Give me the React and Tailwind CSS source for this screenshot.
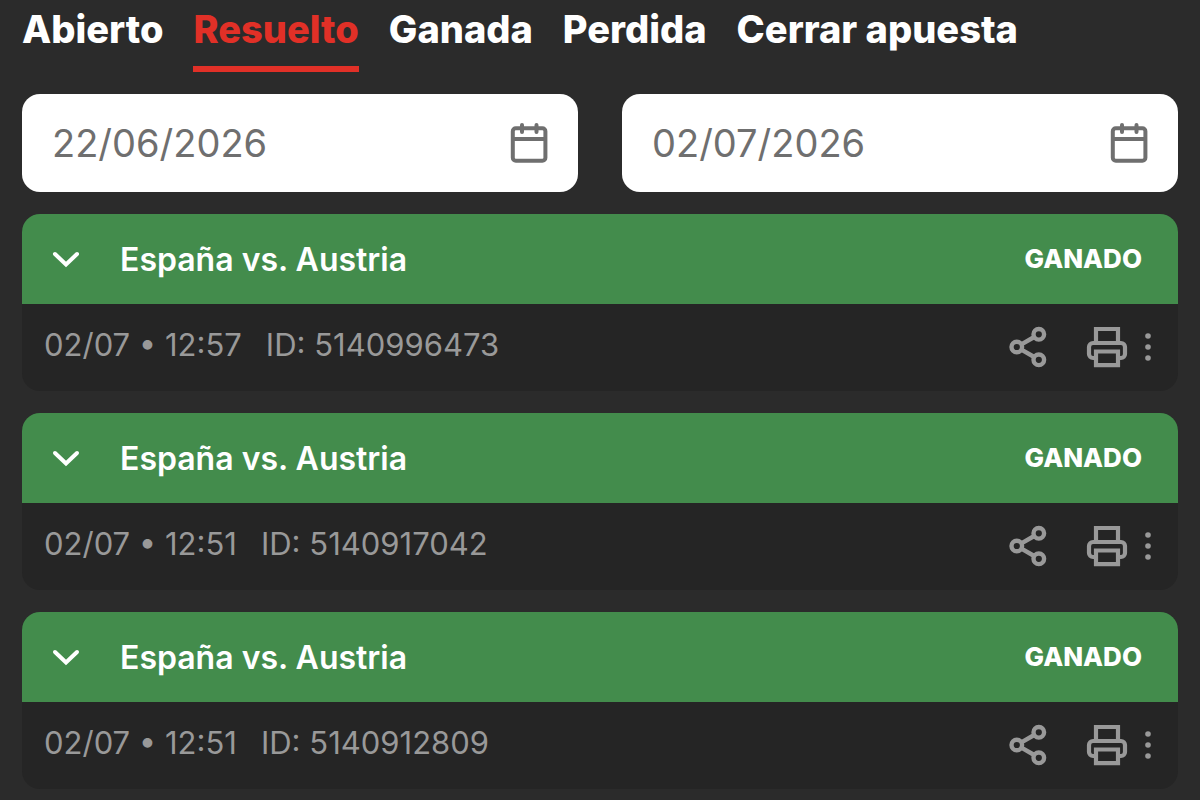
import React, { useState } from 'react';

const TABS = ['Abierto', 'Resuelto', 'Ganada', 'Perdida', 'Cerrar apuesta'];

const BETS = [
  { id: '5140996473', match: 'España vs. Austria', date: '02/07', time: '12:57', status: 'GANADO' },
  { id: '5140917042', match: 'España vs. Austria', date: '02/07', time: '12:51', status: 'GANADO' },
  { id: '5140912809', match: 'España vs. Austria', date: '02/07', time: '12:51', status: 'GANADO' },
];

const CalendarIcon = () => (
  <svg width="38" height="42" viewBox="0 0 38 42" fill="none" stroke="currentColor" strokeWidth="4" strokeLinecap="round">
    <rect x="2.8" y="6.2" width="32.6" height="32.6" rx="3" />
    <path d="M3 17h32" />
    <path d="M12 3v7M26.5 3v7" />
  </svg>
);

const ChevronIcon = () => (
  <svg width="28" height="18" viewBox="0 0 28 18" fill="none" stroke="currentColor" strokeWidth="4" strokeLinecap="round">
    <path d="M3 4l11 10.5L25 4" />
  </svg>
);

const ShareIcon = () => (
  <svg width="38" height="42" viewBox="0 0 38 42" fill="none" stroke="currentColor" strokeWidth="4.4">
    <circle cx="29.8" cy="8.3" r="5.3" />
    <circle cx="7.8" cy="21" r="5.3" />
    <circle cx="29.8" cy="33.8" r="5.3" />
    <path d="M12.4 18.4l12.8-7.4M12.4 23.6l12.8 7.4" />
  </svg>
);

const PrintIcon = () => (
  <svg width="42" height="42" viewBox="0 0 42 42" fill="none" stroke="currentColor" strokeWidth="4.2">
    <path d="M10 17V3h22v14" />
    <path d="M10 32H7a4 4 0 0 1-4-4v-7a4 4 0 0 1 4-4h28a4 4 0 0 1 4 4v7a4 4 0 0 1-4 4h-3" />
    <path d="M10 25.5h22v13.7H10z" />
  </svg>
);

const DotsIcon = () => (
  <svg width="6" height="30" viewBox="0 0 6 30" fill="currentColor">
    <circle cx="3" cy="4" r="2.8" />
    <circle cx="3" cy="15" r="2.8" />
    <circle cx="3" cy="26" r="2.8" />
  </svg>
);

const DateField = ({ label, value, onChange }) => (
  <div className="flex h-[98px] min-w-0 flex-1 items-center rounded-[18px] bg-white px-[30px] text-[#6f6f6f]">
    <input
      type="text"
      aria-label={label}
      value={value}
      onChange={(e) => onChange(e.target.value)}
      className="min-w-0 flex-1 bg-transparent text-[38px] leading-[46px] outline-none"
    />
    <button type="button" aria-label={`Calendario: ${label}`}>
      <CalendarIcon />
    </button>
  </div>
);

const BetCard = ({ bet }) => (
  <article className="overflow-hidden rounded-[18px] bg-[#252525]">
    <header className="flex h-[90px] items-center bg-[#438c4c] pr-9 pl-[30px] text-white">
      <button type="button" aria-label="Ver detalle" className="mr-10">
        <ChevronIcon />
      </button>
      <h2 className="flex-1 pt-0.5 text-[32px] leading-10 font-semibold">{bet.match}</h2>
      <span className="text-[26px] leading-10 font-extrabold">{bet.status}</span>
    </header>
    <div className="flex h-[87px] items-center pr-[27px] pb-0.5 pl-[22px] text-[#999999]">
      <p className="flex flex-1 gap-6 pb-1 text-[31px] leading-10">
        <span>{bet.date} • {bet.time}</span>
        <span>ID: {bet.id}</span>
      </p>
      <button type="button" aria-label="Compartir" className="mr-[39px]">
        <ShareIcon />
      </button>
      <button type="button" aria-label="Imprimir" className="mr-[17px]">
        <PrintIcon />
      </button>
      <button type="button" aria-label="Más opciones">
        <DotsIcon />
      </button>
    </div>
  </article>
);

const App = () => {
  const [activeTab, setActiveTab] = useState('Resuelto');
  const [from, setFrom] = useState('22/06/2026');
  const [to, setTo] = useState('02/07/2026');

  return (
    <main className="min-h-screen bg-[#2b2b2b] px-[22px] pb-3 font-['Inter',sans-serif]">
      <nav className="flex gap-[30px]">
        {TABS.map((tab) => (
          <button
            key={tab}
            type="button"
            onClick={() => setActiveTab(tab)}
            className={`h-[72px] border-b-6 pt-1 pb-3 text-[38px] leading-[50px] font-extrabold whitespace-nowrap
              ${tab === activeTab ? 'border-[#e13027] text-[#e13027]' : 'border-transparent text-white'}`}
          >
            {tab}
          </button>
        ))}
      </nav>

      <div className="mt-[22px] flex gap-11">
        <DateField label="Desde" value={from} onChange={setFrom} />
        <DateField label="Hasta" value={to} onChange={setTo} />
      </div>

      <section className="mt-[22px] flex flex-col gap-[22px]">
        {BETS.map((bet) => (
          <BetCard key={bet.id} bet={bet} />
        ))}
      </section>
    </main>
  );
};

export default App;
